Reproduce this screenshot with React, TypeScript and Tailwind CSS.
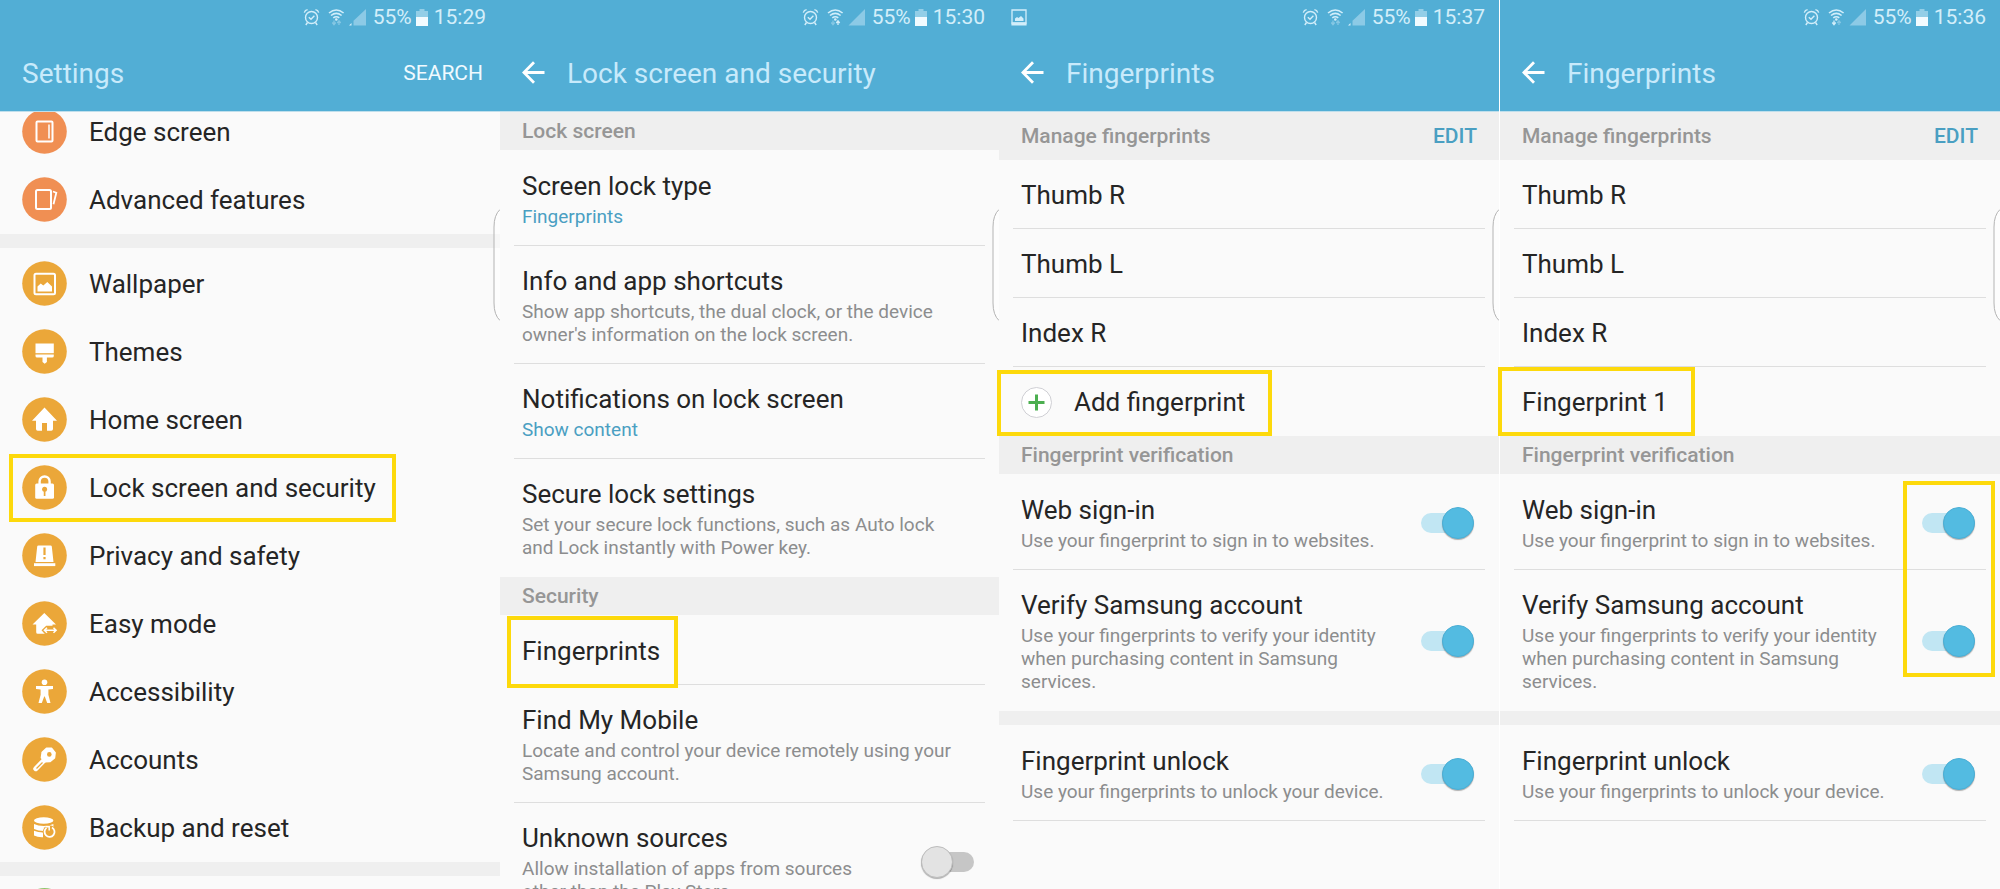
import { useState } from "react";
import type { ReactNode } from "react";

type IconName =
	| "edge" | "advanced" | "wallpaper" | "themes" | "home" | "lock"
	| "privacy" | "easy" | "accessibility" | "accounts" | "backup";

type MenuItem = {
	icon: IconName;
	label: string;
	highlighted?: boolean;
}

const deviceItems: MenuItem[] = [
	{ icon: "edge", label: "Edge screen" },
	{ icon: "advanced", label: "Advanced features" },
];

const personalItems: MenuItem[] = [
	{ icon: "wallpaper", label: "Wallpaper" },
	{ icon: "themes", label: "Themes" },
	{ icon: "home", label: "Home screen" },
	{ icon: "lock", label: "Lock screen and security", highlighted: true },
	{ icon: "privacy", label: "Privacy and safety" },
	{ icon: "easy", label: "Easy mode" },
	{ icon: "accessibility", label: "Accessibility" },
	{ icon: "accounts", label: "Accounts" },
	{ icon: "backup", label: "Backup and reset" },
];

// Glyphs are drawn on a 45x45 disc, "currentColor" is the disc colour
const glyphs: Record<IconName, ReactNode> = {
	edge: (
		<g fill="none" stroke="#fff" strokeWidth="2">
			<rect x="14.5" y="12.5" width="16" height="20" rx="1" />
			<path d="M27 15.5v14" strokeWidth="1.5" />
		</g>
	),
	advanced: (
		<g fill="none" stroke="#fff" strokeWidth="2">
			<rect x="14" y="13" width="15" height="19" rx="1.5" />
			<path d="M31 14.5l3.3 1.2-2.8 11.5" strokeWidth="1.8" />
		</g>
	),
	wallpaper: (
		<g>
			<rect x="12.5" y="12.8" width="20.5" height="20.5" rx="1.5" fill="none" stroke="#fff" strokeWidth="2" />
			<path d="M15.5 30.5v-5l3.2-3 2.6 2 4-3.6 4.7 4.6v5z" fill="#fff" />
		</g>
	),
	themes: (
		<g fill="#fff">
			<path d="M13.5 14.5h18.3v9.7H13.5z" />
			<path d="M13.5 25.5h18.3v1.5q0 1.6-1.6 1.6h-5.3v4.5l-2.2 1.6-2.2-1.6v-4.5h-5.4q-1.6 0-1.6-1.6z" />
		</g>
	),
	home: <path d="M22.5 10.5L35 23.8h-4V32q0 1.7-1.7 1.7H25V26h-5v7.7h-4.3q-1.7 0-1.7-1.7v-8.2h-4z" fill="#fff" />,
	lock: (
		<g>
			<path d="M17.6 19v-2.5a5 5 0 0 1 10 0V19" fill="none" stroke="#fff" strokeWidth="2.4" />
			<rect x="13.2" y="18.5" width="18.8" height="15.3" rx="1.5" fill="#fff" />
			<circle cx="22.6" cy="24.3" r="2.5" fill="currentColor" />
			<path d="M22.6 25v6" stroke="currentColor" strokeWidth="1.7" />
		</g>
	),
	privacy: (
		<g>
			<path d="M16.5 12.5h12q1.2 0 1.3 1L31.5 29h-18l1.7-15.5q.1-1 1.3-1z" fill="#fff" />
			<path d="M12 30.2h21.3v2.9H12z" fill="#fff" />
			<path d="M22.5 14.5v7.5M22.5 24v2.3" stroke="currentColor" strokeWidth="2.2" />
		</g>
	),
	easy: (
		<g>
			<path d="M22.3 12L34 23.5h-3.5v9.3H15.8q-1.6 0-1.6-1.6v-7.7h-3.7z" fill="#fff" />
			<path d="M19.5 29.3l4.7-4.6h8.3l5 4.6-5 5H24z" fill="currentColor" />
			<path d="M23 29.3h11M25 26.8l-2.6 2.5 2.6 2.5M31.5 26.8l2.6 2.5-2.6 2.5" fill="none" stroke="#fff" strokeWidth="1.5" />
		</g>
	),
	accessibility: (
		<g fill="#fff">
			<circle cx="22.5" cy="13.3" r="2.8" />
			<path d="M14 17h17v2.9l-4.6.6v5.2L28.500 34h-3.300l-2.400-6.500h-.6L19.800 34h-3.300l2.100-8.300v-5.200l-4.600-.6z" />
		</g>
	),
	accounts: (
		<g>
			<path d="M23.3 22l-9.5 9.700" stroke="#fff" strokeWidth="5" strokeLinecap="round" />
			<path d="M24.5 11.300h5l3.600 4.500-.6 5.200-4.600 3.600-5 .2-3.500-4 .8-5.500z" fill="#fff" stroke="#fff" strokeWidth="1.5" strokeLinejoin="round" />
			<circle cx="27.3" cy="17.4" r="2.3" fill="currentColor" />
			<path d="M20.5 25.500l-6 6" stroke="currentColor" strokeWidth="1.2" />
		</g>
	),
	backup: (
		<g>
			<ellipse cx="21.7" cy="15.5" rx="9.7" ry="3.2" fill="#fff" />
			<path d="M12 19q4 2 9.700 2 5.700 0 9.700-2v5H22v2q-6 0-10-2z" fill="#fff" />
			<path d="M12 25.800q4 1.700 9 1.700v4.800q-5.500.2-9-1.700z" fill="#fff" />
			<circle cx="27.5" cy="27" r="6.8" fill="currentColor" />
			<path d="M30 22.500a5 5 0 1 1-5.500.4" fill="none" stroke="#fff" strokeWidth="1.8" />
			<path d="M23.500 21.800h3.700v3.800" fill="none" stroke="#fff" strokeWidth="1.5" />
		</g>
	),
};

function MenuIcon({ name }: { name: IconName }) {
	const orange = name === "edge" || name === "advanced";
	return (
		<svg viewBox="0 0 45 45" className={`size-[45px] shrink-0 ${orange ? "text-[#f08f53]" : "text-[#eba739]"}`} aria-hidden="true">
			<circle cx="22.5" cy="22.5" r="22.3" fill="currentColor" />
			{glyphs[name]}
		</svg>
	);
}

type StatusProps = {
	time: string;
	picture?: boolean;
	down?: boolean;
	up?: boolean;
	weak?: boolean;
}

function StatusBar({ time, picture, down, up, weak }: StatusProps) {
	return (
		<div className="flex h-[34px] items-center px-3 text-[21px] leading-none text-[#d3eefa]">
			{picture && (
				<svg viewBox="0 0 16 17" className="h-[17px] w-4" aria-hidden="true">
					<path d="M1 1h14v13H1z" fill="none" stroke="currentColor" strokeWidth="1.3" />
					<path d="M.4 13.500h15.200v3H.4z" fill="currentColor" />
					<path d="M4 12V9.500l2-1.500 1.500 1L10 7l2.500 2.500V12z" fill="currentColor" />
				</svg>
			)}
			<svg viewBox="0 0 64 18" className="ml-auto h-[18px] w-16" aria-hidden="true">
				<g fill="none" stroke="currentColor" strokeWidth="1.4">
					<circle cx="8.5" cy="9.5" r="6" />
					<path d="M5.800 9.200l2.200 2 3.400-3.400M1.300 4.600Q2 2 4.600 1.600M15.700 4.600Q15 2 12.400 1.600M4.500 14.500L2.800 17M12.500 14.500l1.700 2.500" />
					<path d="M26 5q7.300-6 14.600 0M28 7.500q5.300-4.300 10.600 0M30.300 9.800q3-2.200 6 0" strokeWidth="1.6" />
				</g>
				<circle cx="33.3" cy="11.5" r="1.3" fill="currentColor" />
				<path d="M31 12.500v4M29.300 14.500l1.700 2.200 1.700-2.200" fill="none" stroke="currentColor" strokeWidth="1.3" opacity={down ? 1 : 0.4} />
				<path d="M36 17v-4M34.300 15l1.700-2.200 1.700 2.200" fill="none" stroke="currentColor" strokeWidth="1.3" opacity={up ? 1 : 0.4} />
				{weak ? (
					<>
						<path d="M50.500 12.700v4.800H63V1z" fill="currentColor" opacity=".45" />
						<path d="M46 17.500h2.500V15z" fill="currentColor" />
					</>
				) : (
					<path d="M46.500 17.500H63V1z" fill="currentColor" opacity=".45" />
				)}
			</svg>
			<span className="ml-1.5">55%</span>
			<svg viewBox="0 0 12 17" className="ml-1 h-[17px] w-3" aria-hidden="true">
				<path d="M3.500 0h5v2H12v6H0V2h3.500z" fill="currentColor" opacity=".5" />
				<path d="M0 8h12v9H0z" fill="#f2fbff" />
			</svg>
			<span className="mr-0.5 ml-1.5">{time}</span>
		</div>
	);
}

function Header({ title, back, action, ...status }: StatusProps & { title: string; back?: boolean; action?: string }) {
	return (
		<header className="relative z-10 border-b border-[#bfdfec] bg-[#52aed5]">
			<StatusBar {...status} />
			<div className="flex h-[77px] items-center pr-[17px] pl-[22px]">
				{back && (
					<button type="button" aria-label="Back" className="mr-[22px]">
						<svg viewBox="0 0 23 23" className="size-[23px]" fill="none" stroke="#fff" strokeWidth="2.8" aria-hidden="true">
							<path d="M22.500 11.500H2M12 1.200L1.900 11.500 12 21.800" />
						</svg>
					</button>
				)}
				<h1 className="pt-0.5 text-[28px] leading-[34px] text-[#c8eafb]">{title}</h1>
				{action && <button type="button" className="ml-auto pt-0.5 text-[21px] text-[#f0faff]">{action}</button>}
			</div>
		</header>
	);
}

// Pull tab of the edge panel, seen at the right side of every screen
function EdgeHandle() {
	return (
		<svg viewBox="0 0 7 112" className="absolute top-[209px] right-0 h-28 w-[7px]" aria-hidden="true">
			<path d="M7 .5Q1 6 1 18v76q0 12 6 17.500" fill="#fff" fillOpacity=".5" stroke="#b4b4b4" />
		</svg>
	);
}

function Highlight({ className }: { className: string }) {
	return <span className={`pointer-events-none absolute z-20 border-4 border-[#fdd90b] ${className}`} />;
}

function MenuList({ items, className = "" }: { items: MenuItem[]; className?: string }) {
	return (
		<ul className={className}>
			{items.map(item => (
				<li key={item.label} className="relative">
					<a href="#" className="flex h-[68px] items-center gap-[22px] px-[22px] text-[26px] leading-[34px]">
						<MenuIcon name={item.icon} />
						<span className="pt-0.5">{item.label}</span>
					</a>
					{item.highlighted && <Highlight className="top-px -bottom-px left-[9px] w-[387px]" />}
				</li>
			))}
		</ul>
	);
}

function Gap() {
	return <div className="h-3.5 bg-[#efefef]" />;
}

function SectionTitle({ children, action }: { children: string; action?: string }) {
	return (
		<div className={`flex items-center justify-between bg-[#efefef] px-[22px] text-[21px] leading-6 font-medium ${action ? "h-12" : "h-[38px]"}`}>
			<h2 className="text-[#969696]">{children}</h2>
			{action && <button type="button" className="text-[#4a9fc2]">{action}</button>}
		</div>
	);
}

type RowProps = {
	title: string;
	note?: string;
	link?: boolean;
	line?: boolean;
	icon?: ReactNode;
	toggle?: boolean;
	children?: ReactNode;
}

function Row({ title, note, link, line = true, icon, toggle, children }: RowProps) {
	const [on, setOn] = useState(toggle);
	const hasToggle = toggle !== undefined;
	const Tag = hasToggle ? "label" : "div";

	return (
		<li className={`relative mx-3.5 border-b px-2 ${line ? "border-[#dedede]" : "border-transparent"}`}>
			<Tag className={`flex items-center ${note ? "pt-[18px] pb-[17px]" : "pt-[18px] pb-4"}`}>
				{icon}
				<span className={`min-w-0 flex-1 ${hasToggle ? "" : "pr-4"}`}>
					<span className="block text-[26px] leading-[34px]">{title}</span>
					{note && <span className={`mt-0.5 block text-[19px] leading-[23px] ${link ? "text-[#4a9fc2]" : "text-[#8c8d8e]"}`}>{note}</span>}
				</span>
				{hasToggle && (
					<input
						type="checkbox"
						checked={on}
						onChange={event => setOn(event.target.checked)}
						className="relative mr-[3px] ml-6 h-8 w-[53px] shrink-0 appearance-none before:absolute before:inset-x-0 before:top-1.5 before:h-5 before:rounded-full before:bg-[#c6c6c6] after:absolute after:top-0 after:left-0 after:size-8 after:rounded-full after:border after:border-[#bdbdbd] after:bg-[#e3e3e3] after:shadow-[0_1px_1px_rgba(0,0,0,0.3)] checked:before:bg-[#c1e6f3] checked:after:left-[21px] checked:after:border-[#4aafd6] checked:after:bg-[#53bbe1]"
					/>
				)}
			</Tag>
			{children}
		</li>
	);
}

function Screen({ children, className = "" }: { children: ReactNode; className?: string }) {
	return (
		<section className={`relative min-w-0 bg-[#fafafa] ${className}`}>
			{children}
			<EdgeHandle />
		</section>
	);
}

function VerificationRows({ children }: { children?: ReactNode }) {
	return (
		<>
			<SectionTitle>Fingerprint verification</SectionTitle>
			<ul className="relative pt-px">
				<Row title="Web sign-in" note="Use your fingerprint to sign in to websites." toggle={true} />
				<Row title="Verify Samsung account" note="Use your fingerprints to verify your identity when purchasing content in Samsung services." toggle={true} line={false} />
				{children}
			</ul>
			<Gap />
			<ul className="pt-px">
				<Row title="Fingerprint unlock" note="Use your fingerprints to unlock your device." toggle={true} />
			</ul>
		</>
	);
}

function App() {
	return (
		<main className="grid h-screen grid-cols-[500fr_499fr_501fr_500fr] overflow-hidden bg-[#fafafa] font-[Roboto,sans-serif] text-[#252525]">
			<Screen>
				<Header title="Settings" action="SEARCH" time="15:29" weak />
				<MenuList items={deviceItems} className="-mt-[15px] pb-px" />
				<Gap />
				<MenuList items={personalItems} className="py-px" />
				<Gap />
				<div className="px-[22px] pt-3">
					<div className="size-[45px] rounded-full bg-[#8cc56a]" />
				</div>
			</Screen>

			<Screen>
				<Header title="Lock screen and security" back time="15:30" up />
				<SectionTitle>Lock screen</SectionTitle>
				<ul className="pt-px">
					<Row title="Screen lock type" note="Fingerprints" link />
					<Row title="Info and app shortcuts" note="Show app shortcuts, the dual clock, or the device owner's information on the lock screen." />
					<Row title="Notifications on lock screen" note="Show content" link />
					<Row title="Secure lock settings" note="Set your secure lock functions, such as Auto lock and Lock instantly with Power key." line={false} />
				</ul>
				<SectionTitle>Security</SectionTitle>
				<ul className="pt-px">
					<Row title="Fingerprints">
						<Highlight className="top-0 -bottom-1 -left-[7px] w-[171px]" />
					</Row>
					<Row title="Find My Mobile" note="Locate and control your device remotely using your Samsung account." />
					<Row title="Unknown sources" note="Allow installation of apps from sources other than the Play Store." toggle={false} />
				</ul>
			</Screen>

			<Screen className="border-r border-white">
				<Header title="Fingerprints" back time="15:37" picture weak />
				<SectionTitle action="EDIT">Manage fingerprints</SectionTitle>
				<ul>
					<Row title="Thumb R" />
					<Row title="Thumb L" />
					<Row title="Index R" />
					<Row
						title="Add fingerprint"
						line={false}
						icon={
							<svg viewBox="0 0 31 31" className="mr-[22px] size-[31px]" aria-hidden="true">
								<circle cx="15.5" cy="15.5" r="15" fill="#fff" stroke="#cfcfd4" />
								<path d="M15.500 7.500v16M7.500 15.500h16" stroke="#4caf50" strokeWidth="3" />
							</svg>
						}
					>
						<Highlight className="top-[3px] -bottom-px -left-4 w-[275px]" />
					</Row>
				</ul>
				<VerificationRows />
			</Screen>

			<Screen>
				<Header title="Fingerprints" back time="15:36" down />
				<SectionTitle action="EDIT">Manage fingerprints</SectionTitle>
				<ul>
					<Row title="Thumb R" />
					<Row title="Thumb L" />
					<Row title="Index R" />
					<Row title="Fingerprint 1" line={false}>
						<Highlight className="top-0 -bottom-px -left-4 w-[197px]" />
					</Row>
				</ul>
				<VerificationRows>
					<Highlight className="top-[7px] right-[5px] h-[196px] w-[92px]" />
				</VerificationRows>
			</Screen>
		</main>
	);
}

export default App;
